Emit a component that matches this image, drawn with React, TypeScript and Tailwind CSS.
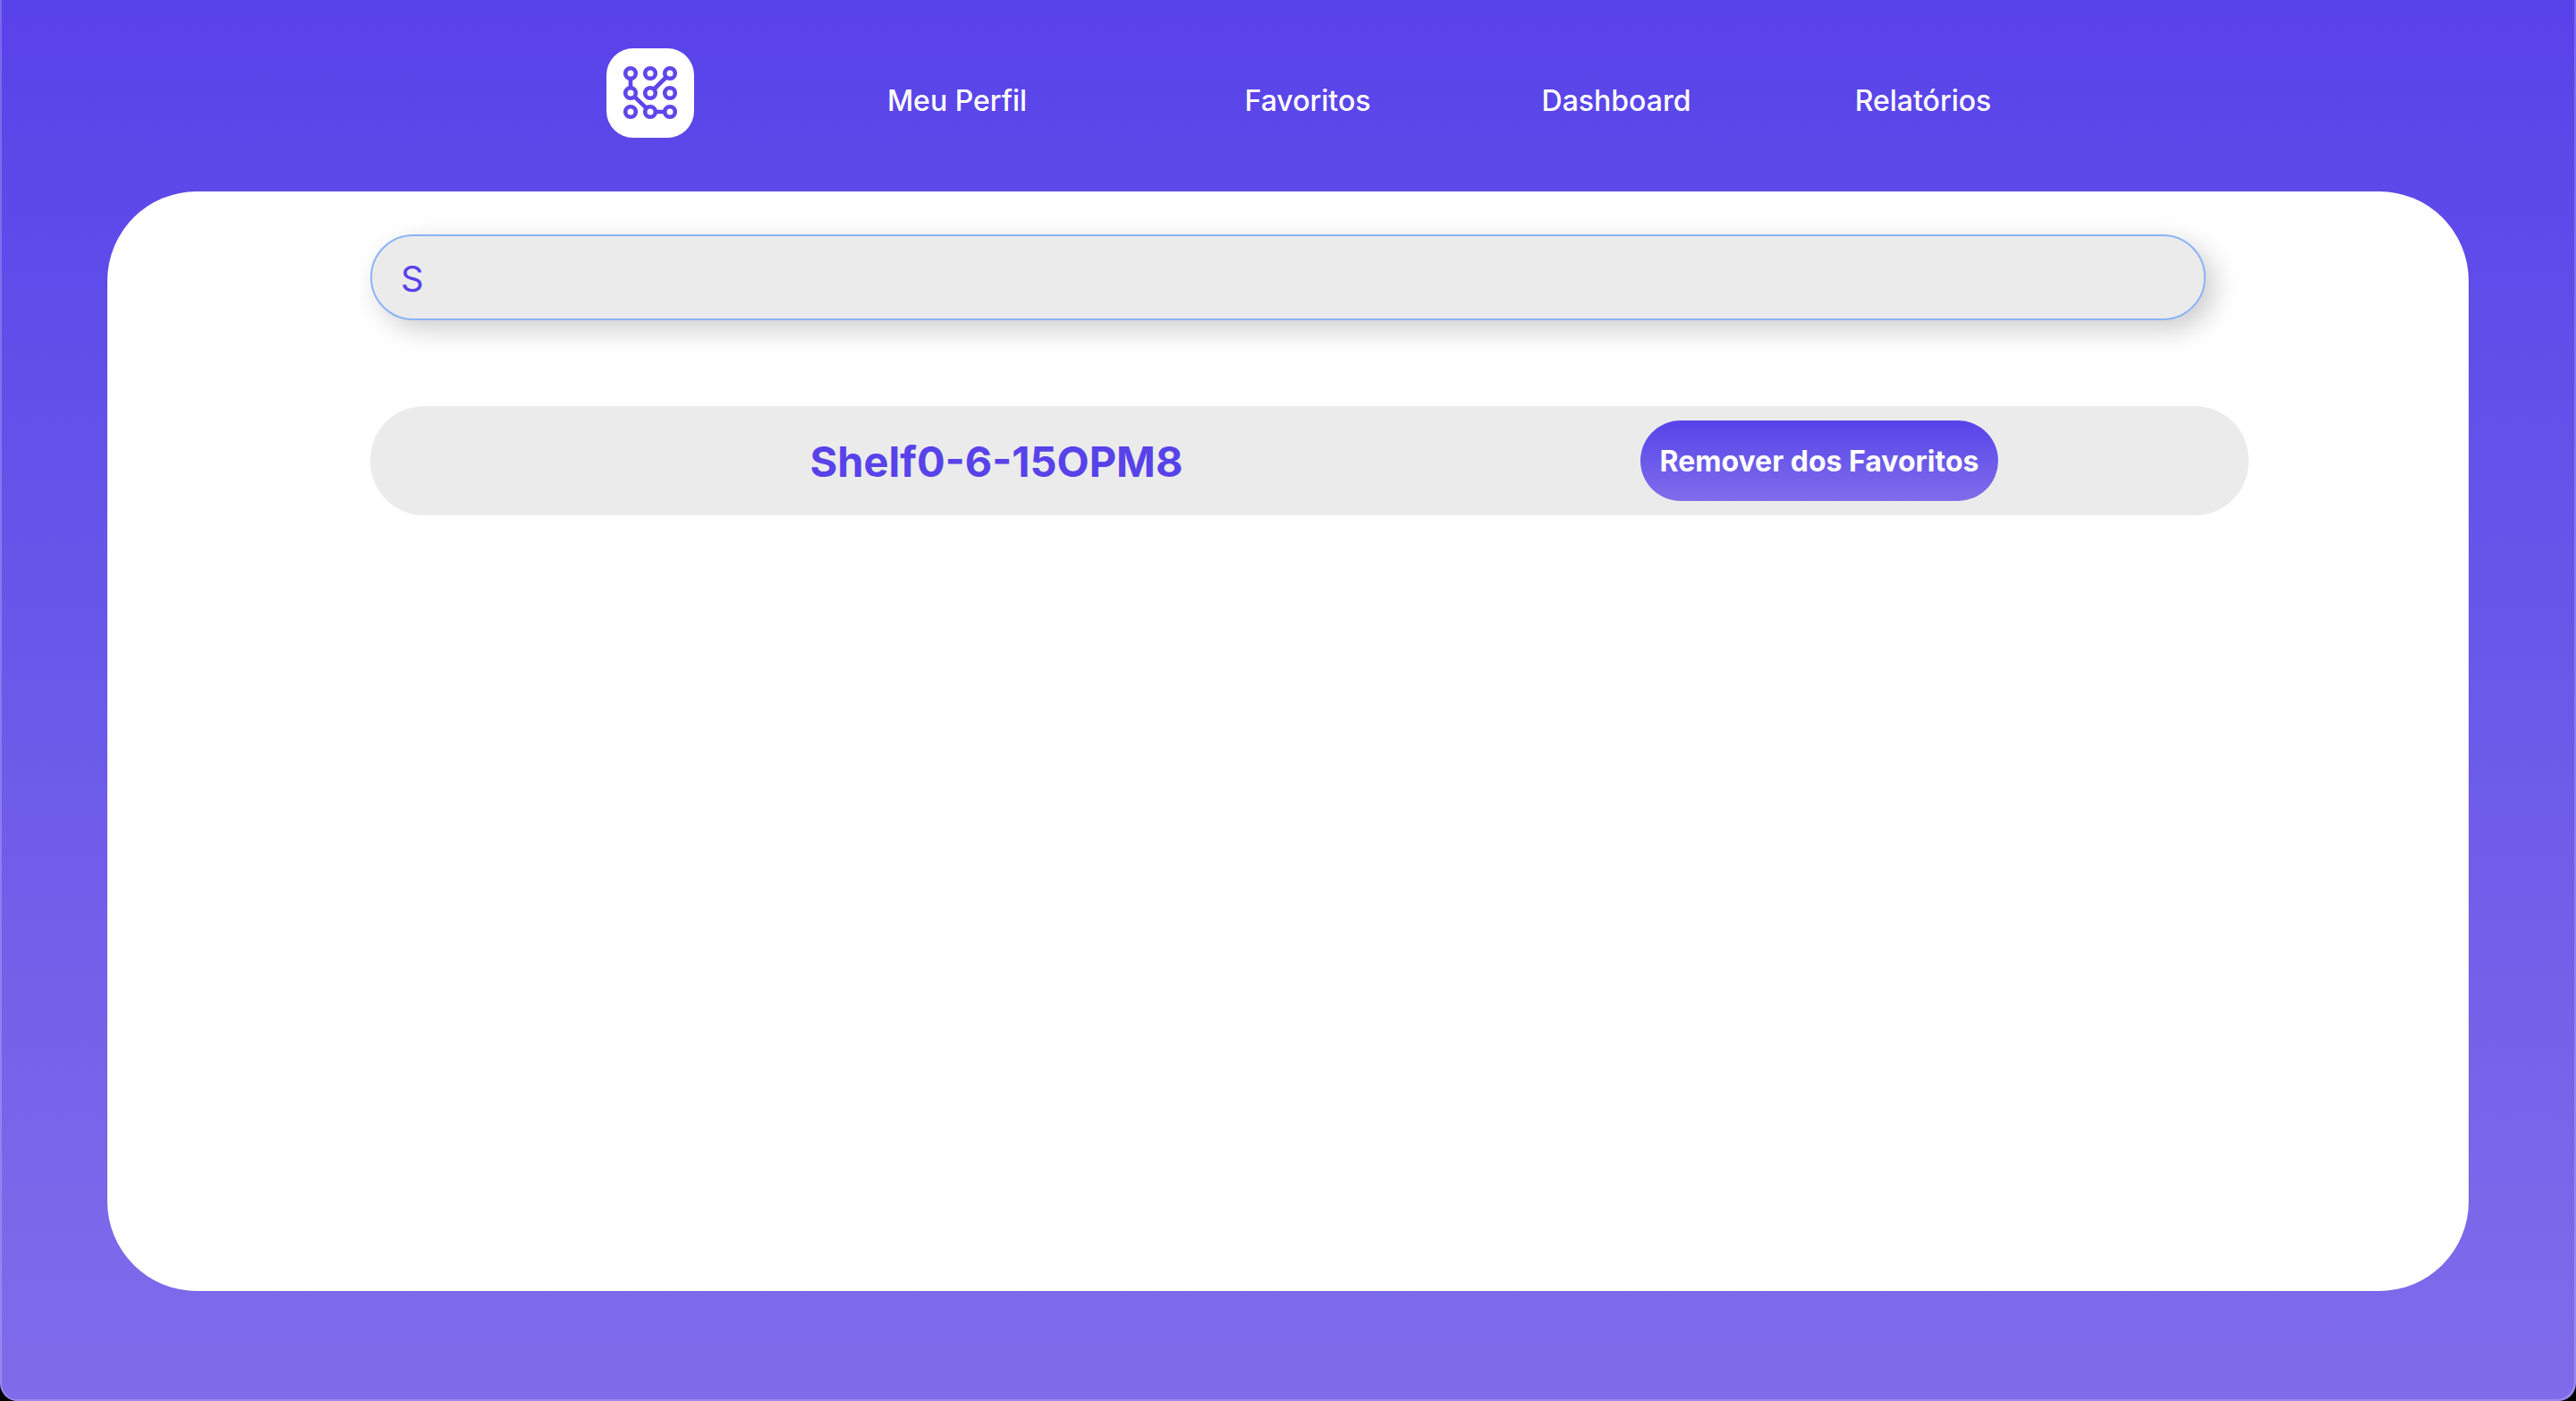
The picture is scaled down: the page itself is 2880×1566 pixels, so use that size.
import { useState } from "react";

const links = ["Meu Perfil", "Favoritos", "Dashboard", "Relatórios"];

const nodes = [
  [45, 42], [67, 42], [89, 42],
  [45, 64], [67, 64], [89, 64],
  [45, 85], [67, 85], [89, 85],
];

function Logo() {
  return (
    <svg viewBox="18 14 98 100" className="h-[100px] w-[98px]" role="img" aria-label="Início">
      <rect x="18" y="14" width="98" height="100" rx="30" fill="#ffffff" />
      <path
        d="M45 42V64L67 85H89M67 64L89 42"
        fill="none"
        stroke="#5e47ea"
        strokeWidth="4.6"
      />
      {nodes.map(([cx, cy]) => (
        <circle key={`${cx}-${cy}`} cx={cx} cy={cy} r="5.8" fill="#ffffff" stroke="#5e47ea" strokeWidth="4.6" />
      ))}
    </svg>
  );
}

export default function App() {
  const [query, setQuery] = useState("S");
  const shelves = ["Shelf0-6-15OPM8"];

  return (
    <div className="bg-black font-[Inter,sans-serif]">
      <div className="flex min-h-screen flex-col rounded-b-[20px] bg-linear-to-b from-[#5842e9] to-[#806cea] shadow-[inset_2px_0_0_rgba(255,255,255,0.2),inset_-2px_-2px_0_rgba(255,255,255,0.2)]">
        <header>
          <nav className="grid h-[214px] grid-cols-[582fr_290fr_396fr_388fr_302fr_384fr_538fr] justify-items-center pt-[54px]">
            <a href="#inicio" className="col-start-2">
              <Logo />
            </a>
            {links.map((label) => (
              <a
                key={label}
                href="#"
                className="pt-9 text-[32px] leading-[46px] font-medium whitespace-nowrap text-white"
              >
                {label}
              </a>
            ))}
          </nav>
        </header>

        <main className="mx-[120px] mb-[123px] flex-1 rounded-[100px] bg-white pt-12 pr-[246px] pl-[294px]">
          <div className="pr-12">
            <input
              type="text"
              aria-label="Buscar favoritos"
              value={query}
              onChange={(e) => setQuery(e.target.value)}
              className="block h-24 w-full rounded-full border-2 border-[#8ab4f8] bg-[#ebebeb] px-8 pt-0.5 text-[40px] text-[#5842e9] shadow-[10px_10px_30px_rgba(0,0,0,0.2)] outline-none"
            />
          </div>
          <ul className="mt-24">
            {shelves.map((name) => (
              <li
                key={name}
                className="grid h-[122px] grid-cols-[2fr_1fr] items-center rounded-[60px] bg-[#ebebeb]"
              >
                <h2 className="pt-0.5 text-center text-[47px] leading-[50px] font-bold text-[#5842e9]">{name}</h2>
                <button
                  type="button"
                  className="ml-5 h-[90px] w-[400px] rounded-full bg-linear-to-b from-[#5842e9] to-[#806cea] pt-0.5 text-[32px] font-bold whitespace-nowrap text-white"
                >
                  Remover dos Favoritos
                </button>
              </li>
            ))}
          </ul>
        </main>
      </div>
    </div>
  );
}
